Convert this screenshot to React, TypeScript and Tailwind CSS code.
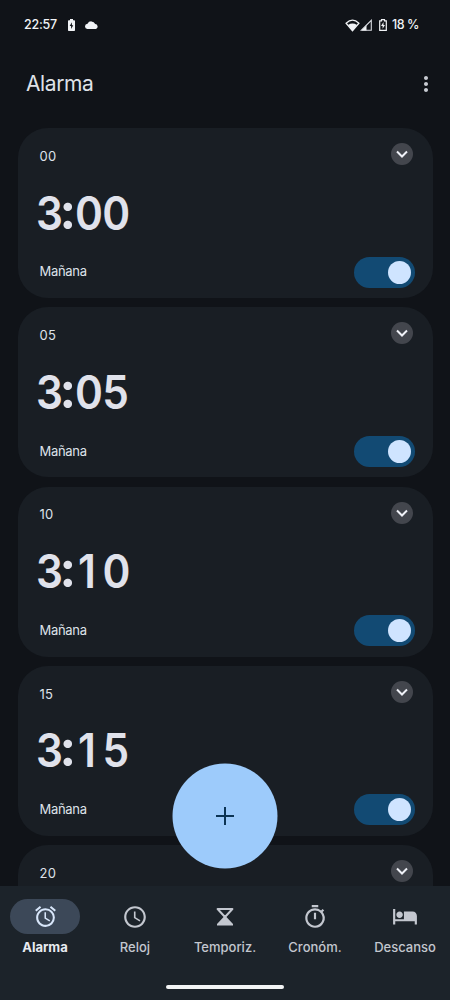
import React from "react";
import { MdAlarm, MdSchedule, MdOutlineTimer, MdMoreVert } from "react-icons/md";

type Alarm = { label: string; minutes?: string };

const alarms: Alarm[] = [
  { label: "00", minutes: "00" },
  { label: "05", minutes: "05" },
  { label: "10", minutes: "10" },
  { label: "15", minutes: "15" },
  { label: "20" },
];

function StatusBar() {
  return (
    <div className="flex h-[50px] items-center pl-6 pr-8 font-['Inter',sans-serif] text-[12.500px] font-medium text-[#f1f3f6]">
      <span className="w-[33px] tracking-[-0.2px]">22:57</span>
      <svg className="ml-[11px] h-3 w-[7px]" viewBox="0 0 7 12">
        <path fill="#f1f3f6" d="M2 0h3v1.3h1.2a.8.8 0 0 1 .8.8v9.1a.8.8 0 0 1-.8.8H.8a.8.8 0 0 1-.8-.8V2.100a.8.8 0 0 1 .8-.8H2z" />
        <path fill="#101318" d="M3.900 3.300 1.700 7h1.400v3l2.200-3.800H3.900z" />
      </svg>
      <svg className="ml-[10px] h-[8px] w-[14px]" viewBox="0 0 14 8">
        <path d="M2.700 8a2.600 2.600 0 0 1-.2-5.200A4.200 4.200 0 0 1 10.200 3 2.600 2.600 0 0 1 11 8Z" fill="#f1f3f6" />
      </svg>
      <div className="ml-auto flex items-center">
        <svg className="h-[13px] w-[15px]" viewBox="0 0 15 13">
          <path d="M1.100 4.200Q7.500-2 13.900 4.200L7.500 11.700Z" fill="none" stroke="#f1f3f6" strokeWidth="1.300" />
          <path d="M3 6Q7.500 3.200 12 6L7.500 11.900Z" fill="#f1f3f6" />
        </svg>
        <svg className="h-3 w-3" viewBox="0 0 12 12">
          <path d="M11.300 1.300v10H1.300z" fill="none" stroke="#d9dce1" strokeWidth="1.100" />
          <path d="M6.500 6.500V11.500H1.500z" fill="#f1f3f6" />
        </svg>
        <svg className="ml-[7px] h-3 w-2" viewBox="0 0 8 12">
          <path d="M.7 1.900h1.800V.6h3v1.300h1.800v9.400H.7z" fill="none" stroke="#f1f3f6" strokeWidth="1.200" />
          <path d="M4.500 3 2 6.900h1.600v2.800L6 5.900H4.500z" fill="#f1f3f6" />
        </svg>
        <span className="ml-[5px] w-[26px] whitespace-nowrap tracking-[-0.5px]">18 %</span>
      </div>
    </div>
  );
}

function AlarmCard({ label, minutes }: Alarm) {
  return (
    <article className="flex h-[170px] shrink-0 flex-col rounded-[30px] bg-[#191e24] pl-[22px] pr-[18px] font-['Inter',sans-serif] text-[#dee2e9]">
      <div className="flex h-[52px] items-center justify-between">
        <span className="pt-[5px] text-[13px] tracking-[0.2px]">{label}</span>
        <button aria-label="Expandir" className="mr-[2px] flex size-[22px] items-center justify-center rounded-full bg-[#43464d]">
          <svg className="h-2 w-3" viewBox="0 0 12 8">
            <path d="m1 1.500 5 5 5-5" fill="none" stroke="#f0f2f8" strokeWidth="2" />
          </svg>
        </button>
      </div>
      {minutes && (
        <>
          <div className="-ml-[4px] flex h-[64px] items-center pt-px text-[46px] font-semibold leading-none text-[#e0e2eb]">
            <span className="w-[25px] origin-left scale-x-[0.920]">3</span>
            <span className="w-[14.500px] -translate-y-[4px] text-center font-['Lato',sans-serif] text-[52px] font-black">:</span>
            <span className={minutes.startsWith("1") ? "ml-[2.500px] origin-left scale-x-[0.920] tracking-[7.300px]" : "origin-left scale-x-[0.920] tracking-[-0.700px]"}>{minutes}</span>
          </div>
          <div className="flex h-[54px] items-center justify-between pt-[2px]">
            <span className="text-[13px] tracking-[-0.3px]">Mañana</span>
            <button role="switch" aria-checked="true" className="flex h-[31px] w-[61px] items-center justify-end rounded-full bg-[#124a73] pr-[4px]">
              <span className="size-[23px] rounded-full bg-[#cfe4ff]" />
            </button>
          </div>
        </>
      )}
    </article>
  );
}

function Hourglass() {
  return (
    <svg className="h-[18px] w-[18px]" viewBox="0 0 18 18">
      <path d="M1.600 1h14.800L9 9Z" fill="none" stroke="#c3c7cf" strokeWidth="2" strokeLinejoin="round" />
      <path d="m9 7.500 8 8.500v1.500H1V16z" fill="#c3c7cf" />
    </svg>
  );
}

function Bed() {
  return (
    <svg className="size-[26px]" viewBox="0 0 24 24" fill="#c3c7cf">
      <path d="M7 13c1.660 0 3-1.340 3-3S8.660 7 7 7s-3 1.340-3 3 1.340 3 3 3zm12-6h-8v7H3V4.500H1V19h2v-3h18v3h2v-8c0-2.210-1.790-4-4-4z" />
    </svg>
  );
}

const tabs = [
  { name: "Alarma", icon: <MdAlarm className="size-[25px]" /> },
  { name: "Reloj", icon: <MdSchedule className="size-[26px]" /> },
  { name: "Temporiz.", icon: <Hourglass /> },
  { name: "Cronóm.", icon: <MdOutlineTimer className="size-[26px]" /> },
  { name: "Descanso", icon: <Bed /> },
];

export default function App() {
  return (
    <div className="relative flex h-[1000px] w-[450px] flex-col overflow-hidden bg-[#101318]">
      <StatusBar />
      <header className="flex h-[78px] items-start justify-between pl-[26px] pr-3 pt-[18px] text-[#dfe2e8]">
        <h1 className="font-['Inter',sans-serif] text-[21px] leading-8 tracking-[-0.4px]">Alarma</h1>
        <MdMoreVert className="mt-[3px] h-[26px] w-6 text-[#c8cbd2]" />
      </header>
      <main className="flex min-h-0 flex-1 flex-col gap-[9.250px] overflow-hidden pl-[17.500px] pr-[17px]">
        {alarms.map((alarm) => (
          <AlarmCard key={alarm.label} {...alarm} />
        ))}
      </main>
      <button aria-label="Añadir alarma" className="absolute left-[172px] top-[763px] flex size-[106px] items-center justify-center">
        <svg className="size-[106px]" viewBox="0 0 106 106">
          <circle cx="53" cy="53" r="52.500" fill="#9dcbfb" />
          <path d="M53 44v18M44 53h18" stroke="#0c3454" strokeWidth="2" />
        </svg>
      </button>
      <nav className="h-[114px] shrink-0 bg-[#1c232a] pt-[13px]">
        <div className="grid grid-cols-5">
          {tabs.map((tab, i) => (
            <div key={tab.name} className="flex flex-col items-center text-[#c3c7cf]">
              <div className={i === 0 ? "flex h-[35px] w-[70px] items-center justify-center rounded-full bg-[#3c4858] text-[#d8e6fa]" : "flex h-[35px] w-[70px] items-center justify-center"}>{tab.icon}</div>
              <span className={i === 0 ? "mt-1 font-['Inter',sans-serif] text-[13px] font-bold leading-[18px] text-[#e8ebf1]" : "mt-1 font-['Inter',sans-serif] text-[13px] font-medium leading-[18px]"}>{tab.name}</span>
            </div>
          ))}
        </div>
        <div className="mx-auto mt-[29px] h-1 w-[118px] rounded-full bg-[#f2f4f5]" />
      </nav>
    </div>
  );
}
